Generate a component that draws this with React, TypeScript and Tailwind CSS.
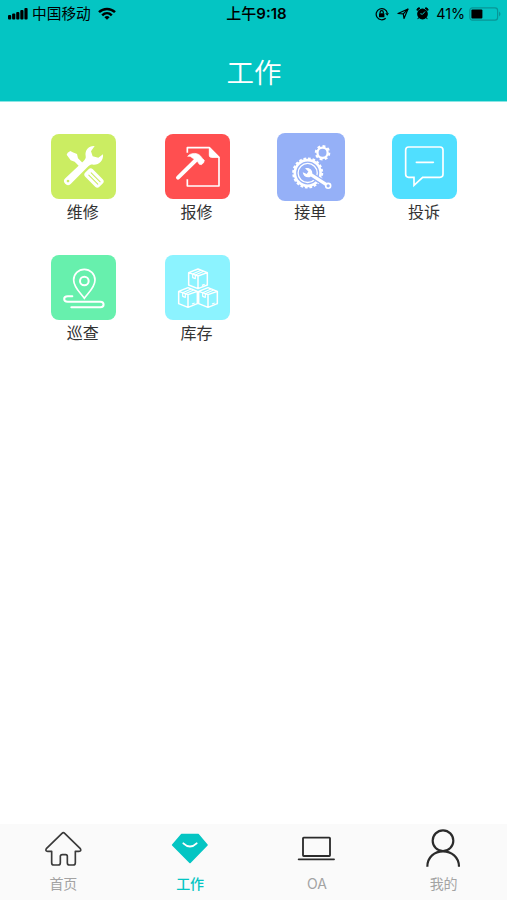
import React from 'react';

interface MenuItem {
  id: string;
  label: string;
  color: string;
  size: string;
  icon: React.ReactNode;
}

interface TabItem {
  id: string;
  label: string;
  icon: React.ReactNode;
}

const WrenchIcon = () => (
  <svg viewBox="0 0 195 195" className="w-full h-full" fill="#fff">
    <path d="M47 62 L50 56 L58 51 L65 55 L78 60 L81 73 L96 88 L86 98 L71 83 L59 79 Z" />
    <path
      fillRule="evenodd"
      d="M131 36 C112 35 101 49 104 66 C105 72 103 76 98 81 L43 133 A11 11 0 0 0 59 150 L112 97 C117 92 121 91 127 92 C144 93 158 81 156 61 L142 71 L125 67 L120 52 Z M51 137 a4 4 0 1 0 .1 0 Z"
    />
    <g transform="rotate(45 129 132)">
      <rect x="99" y="116" width="60" height="32" rx="9" />
      <path d="M112 127 H150 M112 137 H150" stroke="#cbed62" strokeWidth="3.2" strokeLinecap="round" />
    </g>
  </svg>
);

const HammerIcon = () => (
  <svg viewBox="0 0 195 195" className="w-full h-full" fill="none" stroke="#fff">
    <path d="M67 56 V41 H133 L162 70 V156 H67 V136" strokeWidth="5" strokeLinejoin="round" />
    <path d="M133 41 V64 Q133 70 139 70 H162 Z" fill="#fff" strokeWidth="3" />
    <path d="M39 131 L93 78" strokeWidth="12" strokeLinecap="round" />
    <path
      d="M68 67 C76 57 92 56 102 62 C108 66 110 72 118 79 L116 86 L109 92 L103 91 L97 82 C92 76 87 76 82 72 C79 68 74 66 68 67 Z"
      fill="#fff"
      stroke="#fff"
      strokeWidth="2"
    />
  </svg>
);

const GearIcon = () => (
  <svg viewBox="0 0 206 206" className="w-full h-full" fill="none" stroke="#fff">
    <circle cx="93" cy="121" r="39" strokeWidth="8" />
    <circle cx="93" cy="121" r="44" strokeWidth="6" pathLength="80" strokeDasharray="2.4 1.6" />
    <circle cx="93" cy="121" r="29" strokeWidth="4" />
    <circle cx="138" cy="60" r="15.5" strokeWidth="7" />
    <circle cx="138" cy="60" r="20.5" strokeWidth="6" pathLength="32" strokeDasharray="2.2 1.8" />
    <path d="M99 124 L154 160" stroke="#95b0f7" strokeWidth="18" />
    <path d="M98 123 L152 158" strokeWidth="10" />
    <circle cx="155" cy="160" r="7.5" fill="#95b0f7" strokeWidth="5" />
    <path
      d="M85 107 C97 103 108 111 107 123 L101 133 C90 137 79 131 78 119 L90 124 L95 117 Z"
      fill="#fff"
      stroke="none"
    />
  </svg>
);

const CommentIcon = () => (
  <svg viewBox="0 0 195 195" className="w-full h-full" fill="none" stroke="#fff" strokeWidth="5">
    <path d="M50 39 H144 Q153 39 153 48 V121 Q153 130 144 130 H92 L66 154 V130 H50 Q41 130 41 121 V48 Q41 39 50 39 Z" />
    <path d="M73 85 H124" strokeLinecap="round" />
  </svg>
);

const RouteIcon = () => (
  <svg viewBox="0 0 195 195" className="w-full h-full" fill="none" stroke="#fff" strokeLinecap="round">
    <path d="M100 130 C90 115 68 98 68 75 A32 32 0 0 1 132 75 C132 98 110 115 100 130 Z" strokeWidth="5" />
    <circle cx="100" cy="78" r="13" strokeWidth="6" />
    <path d="M64 124 H50 C36 124 36 140 50 140 H148 C161 140 161 157 148 157 H61" strokeWidth="6" />
  </svg>
);

const Box = ({ x, y }: { x: number; y: number }) => (
  <g transform={`translate(${x} ${y})`}>
    <path d="M0 -29 L28 -18 V19 L0 30 L-28 19 V-18 Z M-28 -18 L0 -8 L28 -18 M0 -8 V30" />
    <path d="M-16 -14 L9 -25 M-8 -11 L17 -22 M-16 -13 V-3 L-8 0 V-11" strokeWidth="3.5" />
    <path d="M12 20 L20 17" strokeWidth="4" />
  </g>
);

const BoxesIcon = () => (
  <svg viewBox="0 0 195 195" className="w-full h-full" fill="none" stroke="#fff" strokeWidth="4.5" strokeLinejoin="round">
    <Box x={99} y={71} />
    <Box x={69} y={127} />
    <Box x={129} y={127} />
  </svg>
);

const MENU: MenuItem[] = [
  { id: 'repair', label: '维修', color: 'bg-[#cbed62]', size: 'w-[65px] h-[65px]', icon: <WrenchIcon /> },
  { id: 'report', label: '报修', color: 'bg-[#ff4f50]', size: 'w-[65px] h-[65px]', icon: <HammerIcon /> },
  { id: 'order', label: '接单', color: 'bg-[#95b0f7]', size: 'w-[68px] h-[68px]', icon: <GearIcon /> },
  { id: 'complain', label: '投诉', color: 'bg-[#50dfff]', size: 'w-[65px] h-[65px]', icon: <CommentIcon /> },
  { id: 'patrol', label: '巡查', color: 'bg-[#67f0ad]', size: 'w-[65px] h-[65px]', icon: <RouteIcon /> },
  { id: 'stock', label: '库存', color: 'bg-[#8cf3ff]', size: 'w-[65px] h-[65px]', icon: <BoxesIcon /> },
];

const TABS: TabItem[] = [
  {
    id: 'home',
    label: '首页',
    icon: (
      <path
        d="M57 13 Q61 9 65 13 L112 59 Q116 67 108 67 H97 V101 Q97 108 90 108 H80 Q73 108 73 101 V82 Q73 77 68 77 H58 Q52 77 52 82 V101 Q52 108 45 108 H33 Q26 108 26 101 V67 H14 Q6 67 10 59 Z"
        fill="none"
        stroke="#3a3a3a"
        strokeWidth="5"
        strokeLinejoin="round"
      />
    ),
  },
  {
    id: 'work',
    label: '工作',
    icon: (
      <>
        <path d="M35 17 H85 L111 48 L60 100 L8 48 Z" fill="#04c5c3" stroke="#04c5c3" strokeWidth="5" strokeLinejoin="round" />
        <path d="M40 43 Q60 62 80 43" fill="none" stroke="#fff" strokeWidth="5.5" strokeLinecap="round" />
      </>
    ),
  },
  {
    id: 'oa',
    label: 'OA',
    icon: (
      <g fill="none" stroke="#2b2b2b" strokeWidth="5.5">
        <rect x="18" y="26" width="81" height="55" rx="2" />
        <path d="M5 91 H111" strokeLinecap="round" />
      </g>
    ),
  },
  {
    id: 'mine',
    label: '我的',
    icon: (
      <g fill="none" stroke="#2b2b2b" strokeWidth="6.5">
        <circle cx="57" cy="35" r="31" />
        <path d="M10 113 C10 84 32 67 57 67 C82 67 105 84 105 113" />
      </g>
    ),
  },
];

const StatusBar = () => (
  <div className="h-7 grid grid-cols-[1fr_auto_1fr] items-center pl-2 pr-[6px] text-black">
    <div className="flex items-center">
      <svg width="20" height="13" viewBox="0 0 20 13">
        <rect x="0" y="7" width="3.2" height="4.5" rx="1" />
        <rect x="4.1" y="5.5" width="3.2" height="6" rx="1" />
        <rect x="8.2" y="4" width="3.2" height="7.5" rx="1" />
        <rect x="12.3" y="2" width="3.2" height="9.5" rx="1" />
        <rect x="16.4" y="0" width="3.2" height="11.5" rx="1" />
      </svg>
      <span className="ml-1 text-[14.7px] leading-7">中国移动</span>
      <svg className="ml-[7px] mb-[2px]" width="18" height="13" viewBox="0 0 18 13" fill="none" stroke="#000" strokeWidth="2.5">
        <path d="M1 5.2 C5.5 .8 12.5 .8 17 5.2" />
        <path d="M4.2 8.3 C7 5.6 11 5.6 13.8 8.3" />
        <path d="M6.4 10.2 Q9 8 11.6 10.2 L9 12.8 Z" fill="#000" stroke="none" />
      </svg>
    </div>
    <span className="pl-1 text-[15px] font-semibold leading-7">
      <span className="font-medium">上午</span>9:18
    </span>
    <div className="flex items-center justify-end">
      {/* Rotation lock */}
      <svg className="mb-[1px]" width="14" height="14" viewBox="0 0 14 14" fill="none" stroke="#000" strokeWidth="1.2">
        <path d="M10.7 11.2 A5.6 5.6 0 1 1 12.3 6.2" />
        <path d="M10.2 6.2 H14 L12.2 8.8 Z" fill="#000" stroke="none" />
        <rect x="4" y="6.2" width="5.4" height="4" rx=".5" fill="#000" stroke="none" />
        <path d="M5.1 6.5 V5.2 A1.6 1.6 0 0 1 8.3 5.2 V6.5" />
      </svg>
      <svg className="ml-2 mb-[1px]" width="12" height="12" viewBox="0 0 12 12" fill="none" stroke="#000" strokeWidth="1.2" strokeLinejoin="round">
        <path d="M11 1 L7 10.5 L6.3 5.8 L1 5.5 Z" />
        <path d="M11 1 L6.3 5.8" />
      </svg>
      {/* Alarm */}
      <svg className="ml-[7px] mb-[1px]" width="13" height="13" viewBox="0 0 13 13">
        <circle cx="6.5" cy="7" r="5.4" />
        <path d="M1 3.4 A2 2 0 0 1 4 1.2 Z M12 3.4 A2 2 0 0 0 9 1.2 Z M2.6 10.5 L1.8 12.1 M10.4 10.5 L11.2 12.1" stroke="#000" />
        <path d="M9 4.5 L6.5 7.3 L4.4 6.7" fill="none" stroke="#04c5c3" strokeWidth="1" />
      </svg>
      <span className="ml-[7px] font-['Inter'] text-[14.3px] leading-7">41%</span>
      <svg className="ml-1 mb-[1px]" width="32" height="14" viewBox="0 0 32 14">
        <rect x=".8" y=".8" width="27.8" height="12.4" rx="2.6" fill="none" stroke="#089596" strokeWidth="1.2" />
        <rect x="2.4" y="2.4" width="11" height="9.2" rx="1" />
        <path d="M30 4.5 Q33 7 30 9.5 Z" fill="#089596" />
      </svg>
    </div>
  </div>
);

export default function App() {
  const activeTab = 'work';

  return (
    <div className="w-full h-[900px] flex flex-col bg-white font-['Inter','Noto_Sans_CJK_SC',sans-serif]">
      {/* Header */}
      <header className="h-[102px] shrink-0 bg-[#04c5c3] border-b border-[#8be5e4]">
        <StatusBar />
        <h1 className="pt-[25px] pl-[1px] text-center text-[27.5px] leading-10 font-[350] text-white">工作</h1>
      </header>

      {/* Menu grid */}
      <main className="flex-1 px-[26px] pt-[30px]">
        <div className="grid grid-cols-4">
          {MENU.map((item) => (
            <div key={item.id} className="h-[121px] flex flex-col items-center">
              <div className="h-[69px] pl-[1px] flex items-center">
                <div className={`${item.color} ${item.size} rounded-[8px]`}>{item.icon}</div>
              </div>
              <span className="text-[16px] leading-[22px] text-[#333]">{item.label}</span>
            </div>
          ))}
        </div>
      </main>

      {/* Tab bar */}
      <nav className="h-[76px] shrink-0 grid grid-cols-4 bg-[#fafafa]">
        {TABS.map((tab) => (
          <div key={tab.id} className="pt-[5px] flex flex-col items-center">
            <svg width="40" height="40" viewBox="0 0 120 120">
              {tab.icon}
            </svg>
            <span
              className={`mt-[5px] text-[14px] leading-5 ${
                tab.id === activeTab ? 'text-[#04c5c3] font-medium' : 'text-[#a3a3a3]'
              }`}
            >
              {tab.label}
            </span>
          </div>
        ))}
      </nav>
    </div>
  );
}
